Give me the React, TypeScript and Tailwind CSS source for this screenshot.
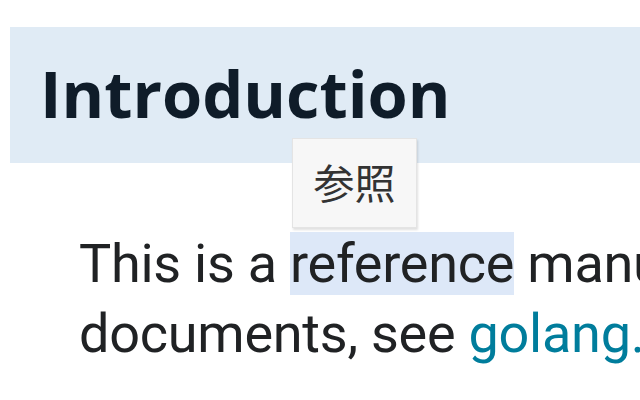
export default function App() {
  return (
    <div className="relative w-[640px] h-[400px] overflow-hidden bg-white">
      {/* section header band */}
      <div className="ml-[10px] mt-[27px] h-[136px] w-[700px] bg-[#e0ebf5] pl-[30px] flex items-center">
        <h2 className="text-[65px] leading-none font-bold text-[#0f1c29] whitespace-nowrap font-['Open_Sans',sans-serif] mt-[-3px]">
          Introduction
        </h2>
      </div>

      {/* body text */}
      <div className="mt-[66px] pl-[79px] w-[1200px] text-[54px] leading-[70px] tracking-[-0.25px] text-[#202224] font-['Roboto',sans-serif] whitespace-nowrap">
        <p>
          This is a <span className="bg-[#dde8f8]">reference</span> manual for
          the Go programming language.
        </p>
        <p>
          documents, see{" "}
          <a className="text-[#007d9c]" href="#">
            golang.org
          </a>
          .
        </p>
      </div>

      {/* translation tooltip */}
      <div className="absolute left-[292px] top-[138px] w-[125px] h-[90px] bg-[#f7f7f7] border border-[#e4e4e4] shadow-[1px_2px_2px_rgba(0,0,0,0.12)] flex items-center justify-center">
        <span className="text-[41px] text-[#333] font-['Noto_Sans_CJK_JP','Noto_Sans_CJK_SC',sans-serif] leading-none mt-[-4px]">
          参照
        </span>
      </div>
    </div>
  );
}
